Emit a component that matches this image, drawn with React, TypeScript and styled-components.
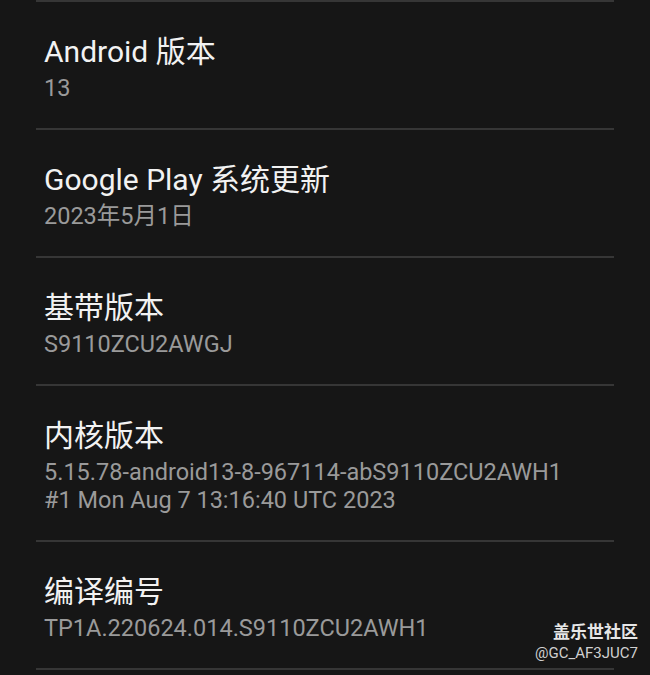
import React from 'react';
import styled, { createGlobalStyle } from 'styled-components';

const GlobalStyle = createGlobalStyle`
  html, body { margin: 0; padding: 0; background: #161616; }
  body { font-family: Roboto, 'Noto Sans CJK SC', sans-serif; }
`;

const Page = styled.div`
  position: relative;
  width: 650px;
  height: 675px;
  overflow: hidden;
  background: #161616;
  padding: 0 36px;
  box-sizing: border-box;
`;

const Item = styled.div`
  border-top: 2px solid #363636;
  padding: 30px 8px 26px;
`;

const Title = styled.div`
  font-size: 30px;
  line-height: 40px;
  color: #f2f2f2;
`;

const Summary = styled.div`
  margin-top: 2px;
  font-size: 23.5px;
  line-height: 28px;
  color: #9a9a9a;
`;

const Watermark = styled.div`
  position: absolute;
  right: 12px;
  bottom: 12px;
  display: flex;
  flex-direction: column;
  align-items: flex-end;
`;

const MarkName = styled.div`
  font-size: 17px;
  line-height: 22px;
  font-weight: 700;
  color: #e6e6e6;
`;

const MarkUser = styled.div`
  font-size: 15px;
  line-height: 20px;
  color: #d0d0d0;
`;

const items = [
  { title: 'Android 版本', lines: ['13'] },
  { title: 'Google Play 系统更新', lines: ['2023年5月1日'] },
  { title: '基带版本', lines: ['S9110ZCU2AWGJ'] },
  { title: '内核版本', lines: ['5.15.78-android13-8-967114-abS9110ZCU2AWH1', '#1 Mon Aug 7 13:16:40 UTC 2023'] },
  { title: '编译编号', lines: ['TP1A.220624.014.S9110ZCU2AWH1'] },
];

export default function App() {
  return (
    <Page>
      <GlobalStyle />
      {items.map((it) => (
        <Item key={it.title}>
          <Title>{it.title}</Title>
          <Summary>
            {it.lines.map((l) => <div key={l}>{l}</div>)}
          </Summary>
        </Item>
      ))}
      <Item />
      <Watermark>
        <MarkName>盖乐世社区</MarkName>
        <MarkUser>@GC_AF3JUC7</MarkUser>
      </Watermark>
    </Page>
  );
}
